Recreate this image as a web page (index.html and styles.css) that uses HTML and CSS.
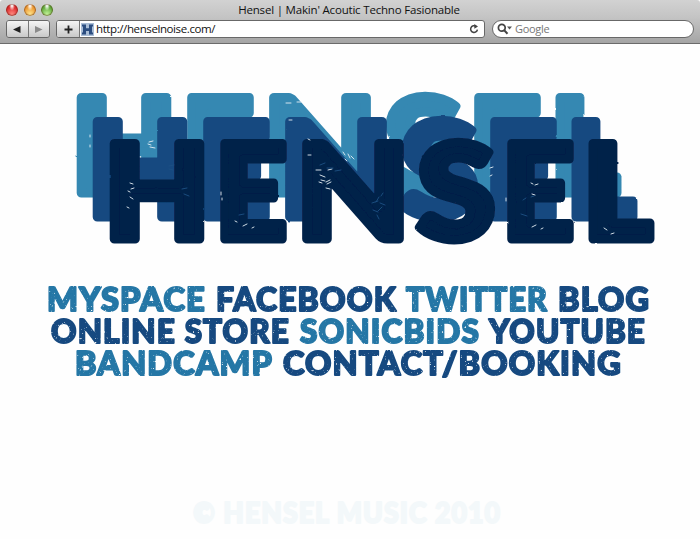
FILE: index.html
```html
<!DOCTYPE html>
<html lang="en">
<head>
<meta charset="utf-8">
<title>Hensel | Makin' Acoutic Techno Fasionable</title>
<link rel="stylesheet" href="styles.css">
</head>
<body>
<header class="chrome">
  <div class="titlebar">
    <div class="lights"><i class="light red"></i><i class="light amber"></i><i class="light green"></i></div>
    <span class="title">Hensel | Makin' Acoutic Techno Fasionable</span>
  </div>
  <div class="toolbar">
    <div class="history">
      <span class="btn"><svg width="8" height="7"><path d="M0 3.5 7.5 0v7z" fill="#222"/></svg></span>
      <span class="btn"><svg width="8" height="7"><path d="M7.5 3.5 0 0v7z" fill="#8b8b8b"/></svg></span>
    </div>
    <div class="address">
      <span class="btn add"><svg width="9" height="9"><path d="M4.5 .5v8M.5 4.500h8" stroke="#222" stroke-width="1.8"/></svg></span>
      <svg class="favicon" width="13" height="13"><path d="M0 0h13v13H0z" fill="#a9bdd6"/><path d="M1 1.500h4v3.700h3V1.500h4v2h-1v6h1v2H8V8H5v3.500H1v-2h1v-6H1z" fill="#2b4d80"/></svg>
      <span class="url">http://henselnoise.com/</span>
      <svg class="reload" width="10" height="10"><path d="M7 2.300A3.400 3.400 0 1 0 8.400 5.600" fill="none" stroke="#444" stroke-width="1.500"/><path d="M5.300 0v4.700L9 2.500z" fill="#444"/></svg>
    </div>
    <div class="search">
      <svg width="16" height="12"><circle cx="4.800" cy="4.800" r="3.400" fill="none" stroke="#444" stroke-width="1.700"/><path d="m7.200 7.200 3.300 3.500" stroke="#444" stroke-width="2"/><path d="M10 3.500h5l-2.500 3z" fill="#555"/></svg>
      <span>Google</span>
    </div>
  </div>
</header>
<main>
  <h1 class="logo" aria-label="Hensel">
    <svg width="700" height="210" viewBox="0 44 700 210">
      <defs>
        <filter id="rough" x="-2%" y="-5%" width="104%" height="110%">
          <feTurbulence type="fractalNoise" baseFrequency=".15" numOctaves="1" seed="4" result="n"/>
          <feDisplacementMap in="SourceGraphic" in2="n" scale="2" xChannelSelector="R" yChannelSelector="G"/>
        </filter>
        <g id="word" class="word">
          <text x="104" y="239" textLength="106" lengthAdjust="spacingAndGlyphs">H</text>
          <text x="215" y="239" textLength="72" lengthAdjust="spacingAndGlyphs">E</text>
          <text x="296" y="239" textLength="114" lengthAdjust="spacingAndGlyphs">N</text>
          <text x="417" y="239" textLength="78" lengthAdjust="spacingAndGlyphs">S</text>
          <text x="502" y="239" textLength="72" lengthAdjust="spacingAndGlyphs">E</text>
          <text x="583" y="239" textLength="69" lengthAdjust="spacingAndGlyphs">L</text>
        </g>
      </defs>
      <g filter="url(#rough)">
        <use href="#word" x="-33" y="-46" class="sky"/>
        <use href="#word" x="-17" y="-22" class="royal"/>
        <use href="#word" class="navy"/>
      </g>
      <g class="scratch">
        <path d="m149 142 4-1m-3 6 5 1m-7-4 3 1M90 135v2m0 8v2m40 36 3 1m-2 5 3-1m-4 9 3 2m-5-8 2 1m-3 15 2 1M243 226l4-2m5 4 2-1m-19-6 2 1m-16-30v3m1 3v2M316 170h5m-1 5 5 2m-4 3 4 1m2 3 4-2m-5 6 4 1m-11-7 3 1m6-13 4-1m-6 13 4-2m-44-77h5m6-1h4m-12 18h3m16 19 2 1m-2 15h3M343 152l2 3m3-1 2 4m-5 1 2 2m4-5 3 3M490 168l3-1m-3 9 2-1m39 8 2 1m2 1 3-1m-6 10 3 1m-3 32 4-2m5 4 2-1m-37-30v3m98 27 3 2m4 4 3-1"/>
      </g>
      <g class="scratch royal-line">
        <path d="m182 189 5-1m-3 6 5 2m-20-27 4 1m-4-4 5-1m65 50 5-1m128-11 6-2m-5 9 5 2m-2-10 3-5m-1 14 4-4m-2-4 5 2m-4-9 2-3m-6 22 2 4M320 165l5-2m2 5h6m2 3 6-1m180 44 6 2m4-19 3-1m-11 4 3-2"/>
      </g>
    </svg>
  </h1>
  <svg class="defs" width="0" height="0">
    <filter id="worn" x="-2%" y="-10%" width="104%" height="120%">
      <feTurbulence type="fractalNoise" baseFrequency=".45" numOctaves="2" seed="9"/>
      <feColorMatrix values="0 0 0 0 1  0 0 0 0 1  0 0 0 0 1  6 0 0 0 -4.100" result="specks"/>
      <feComposite in="SourceGraphic" in2="specks" operator="out"/>
    </filter>
  </svg>
  <nav class="links">
    <div class="row">
      <a class="light-link"><svg width="158" height="32"><text x="0" y="25" textLength="159" lengthAdjust="spacingAndGlyphs">MYSPACE</text></svg></a>
      <a><svg width="180" height="32"><text x="0" y="25" textLength="181" lengthAdjust="spacingAndGlyphs">FACEBOOK</text></svg></a>
      <a class="light-link"><svg width="141" height="32"><text x="0" y="25" textLength="142" lengthAdjust="spacingAndGlyphs">TWITTER</text></svg></a>
      <a><svg width="91" height="32"><text x="0" y="25" textLength="92" lengthAdjust="spacingAndGlyphs">BLOG</text></svg></a>
    </div>
    <div class="row">
      <a><svg width="238" height="32"><text x="0" y="25" textLength="239" lengthAdjust="spacingAndGlyphs">ONLINE STORE</text></svg></a>
      <a class="light-link"><svg width="179" height="32"><text x="0" y="25" textLength="180" lengthAdjust="spacingAndGlyphs">SONICBIDS</text></svg></a>
      <a><svg width="156" height="32"><text x="0" y="25" textLength="157" lengthAdjust="spacingAndGlyphs">YOUTUBE</text></svg></a>
    </div>
    <div class="row">
      <a class="light-link"><svg width="197" height="32"><text x="0" y="25" textLength="198" lengthAdjust="spacingAndGlyphs">BANDCAMP</text></svg></a>
      <a><svg width="338" height="32"><text x="0" y="25" textLength="339" lengthAdjust="spacingAndGlyphs">CONTACT/BOOKING</text></svg></a>
    </div>
  </nav>
</main>
<footer><svg width="308" height="32"><text x="0" y="24" textLength="308" lengthAdjust="spacingAndGlyphs">© HENSEL MUSIC 2010</text></svg></footer>
</body>
</html>
```
FILE: styles.css
```css
* { box-sizing: border-box; }
body { margin: 0; width: 700px; height: 539px; background: #fefefe; overflow: hidden; display: flex; flex-direction: column; font-family: "Open Sans", sans-serif; }
svg { display: block; flex: none; }
.chrome { height: 44px; background: linear-gradient(#d2d2d2, #c4c4c4 40%, #a5a5a5); border-bottom: 1px solid #6b6b6b; border-radius: 3px 3px 0 0; }
.titlebar { height: 20px; display: grid; grid-template-columns: 60px 1fr 62px; align-items: center; }
.lights { display: flex; gap: 5.500px; padding-left: 6px; }
.light { width: 12px; height: 12px; border-radius: 50%; box-shadow: inset 0 0 1px 1px rgba(70,20,0,.45); }
.red { background: radial-gradient(ellipse at 50% 12%, #fff 5%, transparent 35%), radial-gradient(circle at 50% 85%, #ff8a80, #df2d30 60%); }
.amber { background: radial-gradient(ellipse at 50% 12%, #fff 5%, transparent 35%), radial-gradient(circle at 50% 85%, #ffe68c, #ee9a34 60%); }
.green { background: radial-gradient(ellipse at 50% 12%, #fff 5%, transparent 35%), radial-gradient(circle at 50% 85%, #c5f59a, #62ac3d 60%); }
.title { font-size: 11.500px; letter-spacing: -.19px; line-height: 18px; text-align: center; color: #111; white-space: nowrap; }
.toolbar { display: flex; padding: 0 6px; }
.history { display: flex; width: 44px; height: 18px; border: 1px solid #686868; border-radius: 3px; overflow: hidden; margin-right: 6px; }
.btn { flex: 1; display: flex; align-items: center; justify-content: center; background: linear-gradient(#f5f5f5, #c9c9c9); }
.btn + .btn { border-left: 1px solid #777; }
.address { display: flex; align-items: center; width: 429px; height: 18px; border: 1px solid #686868; border-radius: 3px; background: #fff; overflow: hidden; margin-right: 7px; }
.add { flex: 0 0 23px; height: 16px; border-right: 1px solid #777; }
.favicon { margin: 0 2px 0 1px; }
.url { flex: 1; font-size: 11.500px; letter-spacing: -.4px; line-height: 16px; color: #111; white-space: nowrap; }
.reload { margin-right: 5px; }
.search { display: flex; align-items: center; gap: 2px; width: 202px; height: 18px; padding-left: 4px; border: 1px solid #686868; border-radius: 9px; background: #fff; font-size: 11px; letter-spacing: -.3px; line-height: 16px; color: #777; }
.logo { margin: 0; height: 210px; }
.word { font: 900 131px Lato, sans-serif; stroke-width: 9px; stroke-linejoin: round; }
.sky { fill: #3688b2; stroke: #3688b2; }
.royal { fill: #164a80; stroke: #164a80; }
.navy { fill: #052048; stroke: #052048; }
.scratch { fill: none; stroke: #e6eff5; stroke-width: .9; stroke-linecap: round; }
.royal-line { stroke: #1d5083; }
.defs { position: absolute; }
.links { display: flex; flex-direction: column; align-items: center; padding-top: 32px; padding-right: 4px; }
.row { display: flex; gap: 10.500px; height: 32px; }
.row svg, footer svg { overflow: visible; }
.links text, footer text { font: 900 32.500px Lato, sans-serif; letter-spacing: 1.200px; stroke-width: 2px; stroke-linejoin: round; }
.links a { fill: #164a80; stroke: #164a80; }
.links .light-link { fill: #2577a6; stroke: #2577a6; }
.links text { filter: url(#worn); }
footer { display: flex; justify-content: center; margin-top: auto; padding: 0 7px 8px 0; fill: #f3f8fa; stroke: #f3f8fa; }
footer text { font-size: 28px; }
```
